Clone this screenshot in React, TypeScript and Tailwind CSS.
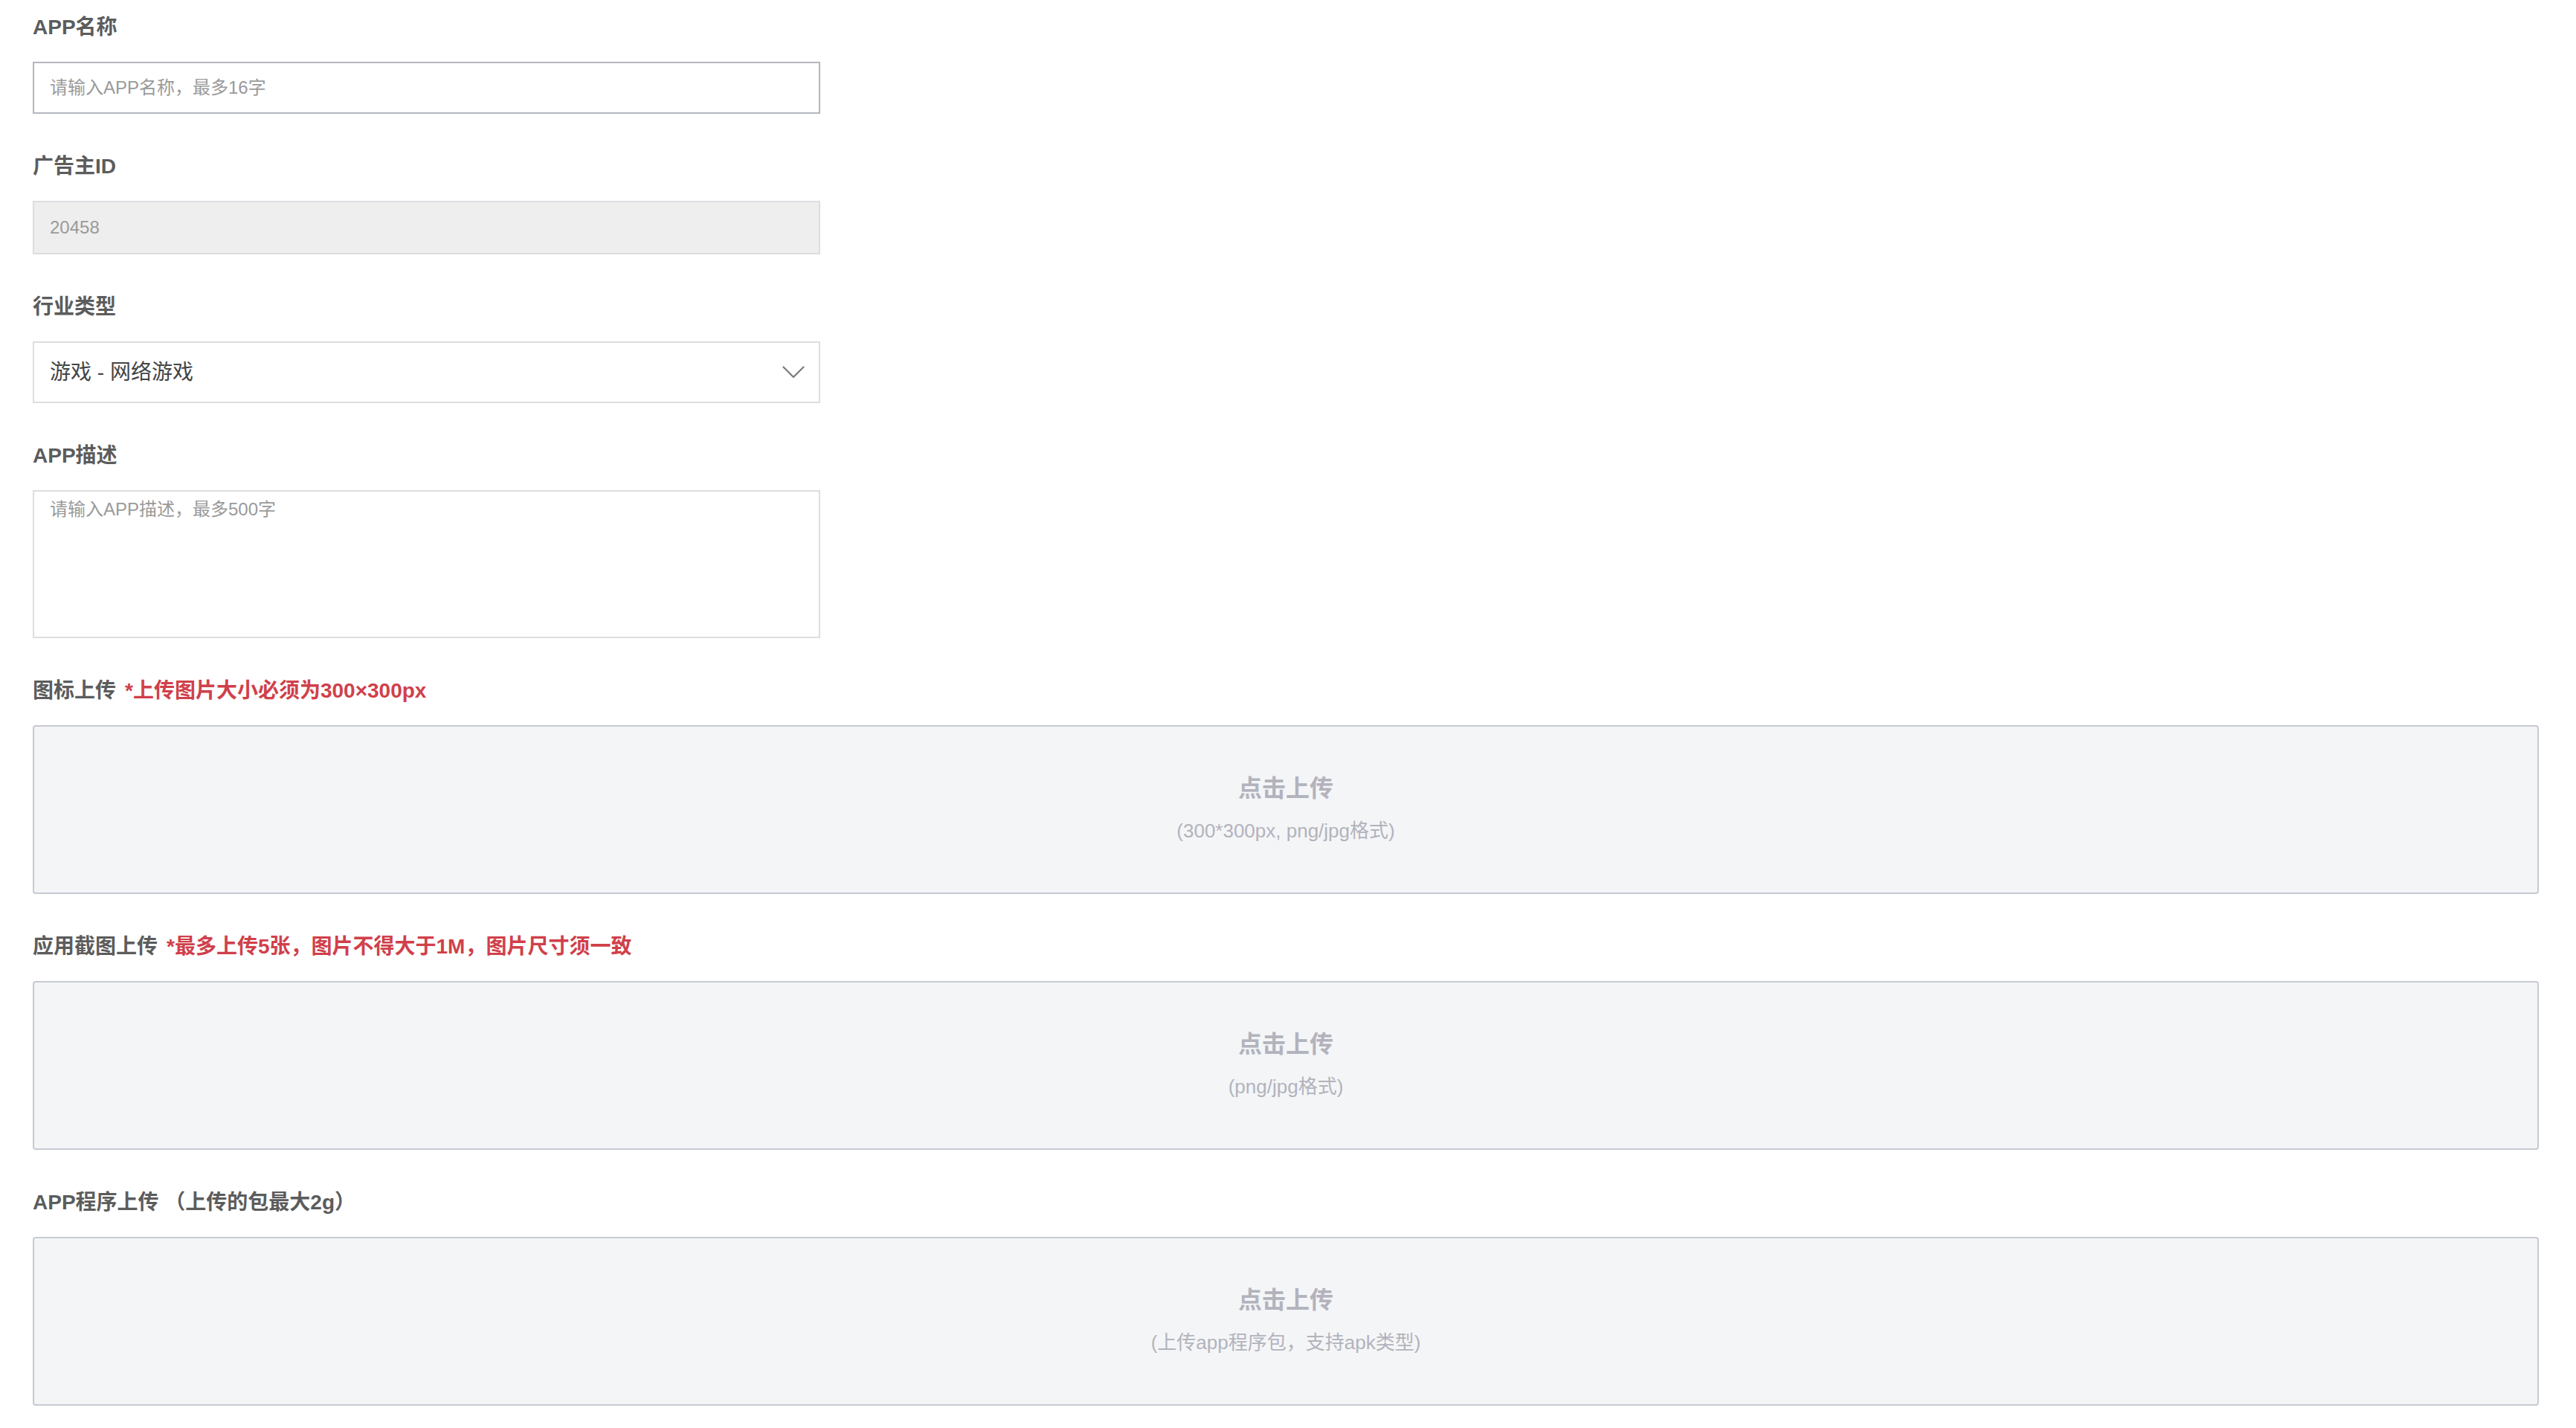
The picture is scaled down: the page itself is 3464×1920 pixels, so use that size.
import React from 'react';

const FONT = '"Liberation Sans", "Noto Sans CJK SC", sans-serif';

function FieldLabel({ text, hint }: { text: string; hint?: string }) {
  return (
    <div className="h-[40px] leading-[40px] mb-[26px] text-[28px] font-bold text-[#5c5c5c] whitespace-nowrap">
      {text}
      {hint && <span className="ml-[12px] text-[#d0404a]">{hint}</span>}
    </div>
  );
}

function UploadBox({ sub }: { sub: string }) {
  return (
    <div className="h-[227px] border-2 border-[#c7cad2] rounded-[4px] bg-[#f4f5f7] flex flex-col items-center justify-center gap-[20px] cursor-pointer">
      <div className="h-[40px] leading-[40px] text-[32px] font-bold text-[#b2b3bc]">点击上传</div>
      <div className="h-[34px] leading-[34px] text-[26px] text-[#b2b3bc] mb-[3px]">{sub}</div>
    </div>
  );
}

export default function App() {
  return (
    <div className="min-h-screen bg-white pt-[17px] pl-[44px] pr-[50px] pb-[30px]" style={{ fontFamily: FONT }}>
      <div className="mb-[51px]">
        <FieldLabel text="APP名称" />
        <input
          readOnly
          placeholder="请输入APP名称，最多16字"
          className="block w-[1059px] h-[70px] border-2 border-[#b4b7c0] bg-white px-[21px] text-[24px] text-[#333] placeholder:text-[#9a9a9a] outline-none"
        />
      </div>

      <div className="mb-[51px]">
        <FieldLabel text="广告主ID" />
        <input
          readOnly
          value="20458"
          className="block w-[1059px] h-[72px] border-2 border-[#dddde2] bg-[#eeeeee] px-[21px] text-[24px] text-[#9a9a9a] outline-none"
        />
      </div>

      <div className="mb-[51px]">
        <FieldLabel text="行业类型" />
        <div className="w-[1059px] h-[83px] border-2 border-[#dddde2] bg-white pl-[21px] pr-[19px] flex items-center justify-between">
          <span className="text-[28px] text-[#444]">游戏 - 网络游戏</span>
          <svg width="30" height="17" viewBox="0 0 30 17" fill="none">
            <polyline points="1.5,1.5 15,15 28.5,1.5" stroke="#7a7a7a" strokeWidth="2.2" strokeLinecap="round" strokeLinejoin="round" />
          </svg>
        </div>
      </div>

      <div className="mb-[51px]">
        <FieldLabel text="APP描述" />
        <textarea
          readOnly
          placeholder="请输入APP描述，最多500字"
          className="block w-[1059px] h-[199px] border-2 border-[#dddde2] bg-white px-[21px] pt-[8px] leading-[32px] text-[24px] text-[#333] placeholder:text-[#9a9a9a] outline-none resize-none"
        />
      </div>

      <div className="mb-[51px]">
        <FieldLabel text="图标上传" hint="*上传图片大小必须为300×300px" />
        <UploadBox sub="(300*300px, png/jpg格式)" />
      </div>

      <div className="mb-[51px]">
        <FieldLabel text="应用截图上传" hint="*最多上传5张，图片不得大于1M，图片尺寸须一致" />
        <UploadBox sub="(png/jpg格式)" />
      </div>

      <div>
        <FieldLabel text="APP程序上传 （上传的包最大2g）" />
        <UploadBox sub="(上传app程序包，支持apk类型)" />
      </div>
    </div>
  );
}
